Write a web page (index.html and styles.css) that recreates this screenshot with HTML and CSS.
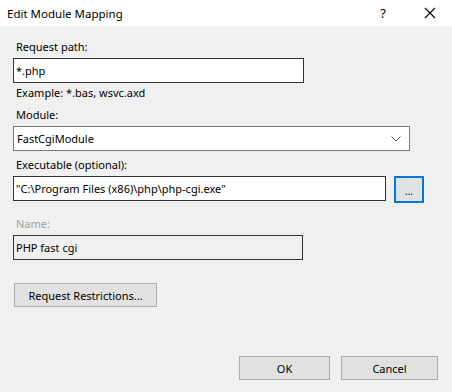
FILE: index.html
```html
<!DOCTYPE html>
<html>
<head>
	<title>Edit Module Mapping</title>
	<link rel="stylesheet" href="styles.css">
</head>
<body>
	<div class="dialog">
		<div class="titlebar">
			<span class="title">Edit Module Mapping</span>
			<span class="help">?</span>
			<svg class="close" width="12" height="12" viewBox="0 0 12 12">
				<path d="M1 1L11 11M11 1L1 11" stroke="#000" stroke-width="1.1" fill="none"/>
			</svg>
		</div>
		<div class="content">
			<label class="label first">Request path:</label>
			<input class="textbox path" type="text" value="*.php" readonly>
			<div class="hint">Example: *.bas, wsvc.axd</div>

			<label class="label">Module:</label>
			<div class="combo">
				<span>FastCgiModule</span>
				<svg width="10" height="6" viewBox="0 0 10 6">
					<path d="M0.5 0.5L5 5L9.5 0.5" stroke="#606060" stroke-width="1" fill="none"/>
				</svg>
			</div>

			<label class="label">Executable (optional):</label>
			<div class="exec-row">
				<input class="textbox exec" type="text" value="&quot;C:\Program Files (x86)\php\php-cgi.exe&quot;" readonly>
				<button class="btn browse">...</button>
			</div>

			<label class="label disabled">Name:</label>
			<input class="textbox name" type="text" value="PHP fast cgi" readonly>

			<button class="btn restrictions">Request Restrictions...</button>

			<div class="actions">
				<button class="btn ok">OK</button>
				<button class="btn cancel">Cancel</button>
			</div>
		</div>
	</div>
</body>
</html>
```

FILE: styles.css
```css
body {
	margin: 0;
	font-family: "Noto Sans", "Open Sans", sans-serif;
	font-size: 11px;
	color: #000;
}
.dialog {
	width: 452px;
	height: 392px;
	background: #f0f0f0;
	display: flex;
	flex-direction: column;
}
.titlebar {
	height: 26px;
	background: #fff;
	display: flex;
	align-items: center;
	padding-left: 7px;
}
.title {
	flex: 1;
	font-size: 11.5px;
}
.help {
	font-size: 13px;
	margin-right: 38px;
}
.close {
	margin-right: 16px;
}
.content {
	display: flex;
	flex-direction: column;
	align-items: flex-start;
	padding: 0 13px;
	flex: 1;
}
.label {
	display: block;
	line-height: 16px;
	padding-left: 3px;
	margin-top: 6px;
	margin-bottom: 3px;
}
.label.first {
	margin-top: 13px;
}
.label.disabled {
	color: #a0a0a0;
	margin-top: 13px;
}
.hint {
	line-height: 16px;
	padding-left: 3px;
	margin-top: 2px;
}
.textbox {
	box-sizing: border-box;
	height: 25px;
	margin: 0;
	border: 1px solid #333;
	background: #fff;
	font: inherit;
	padding: 0 2px;
	outline: none;
}
.path {
	width: 291px;
}
.combo {
	box-sizing: border-box;
	width: 397px;
	height: 25px;
	border: 1px solid #7a7a7a;
	background: #fff;
	display: flex;
	align-items: center;
	justify-content: space-between;
	padding: 0 8px 0 3px;
}
.exec-row {
	display: flex;
	gap: 8px;
	align-items: flex-start;
}
.exec {
	width: 373px;
}
.name {
	width: 290px;
	background: #f0f0f0;
}
.btn {
	box-sizing: border-box;
	font: inherit;
	background: #e1e1e1;
	border: 1px solid #adadad;
	margin: 0;
	padding: 0;
}
.browse {
	width: 30px;
	height: 27px;
	border: 2px solid #0078d7;
	font-size: 10px;
	padding-top: 2px;
}
.restrictions {
	width: 143px;
	height: 24px;
	margin-top: 23px;
	margin-left: 1px;
}
.actions {
	align-self: flex-end;
	display: flex;
	gap: 11px;
	margin-top: 49px;
	margin-right: 1px;
}
.ok {
	width: 91px;
	height: 24px;
}
.cancel {
	width: 97px;
	height: 24px;
}
```
